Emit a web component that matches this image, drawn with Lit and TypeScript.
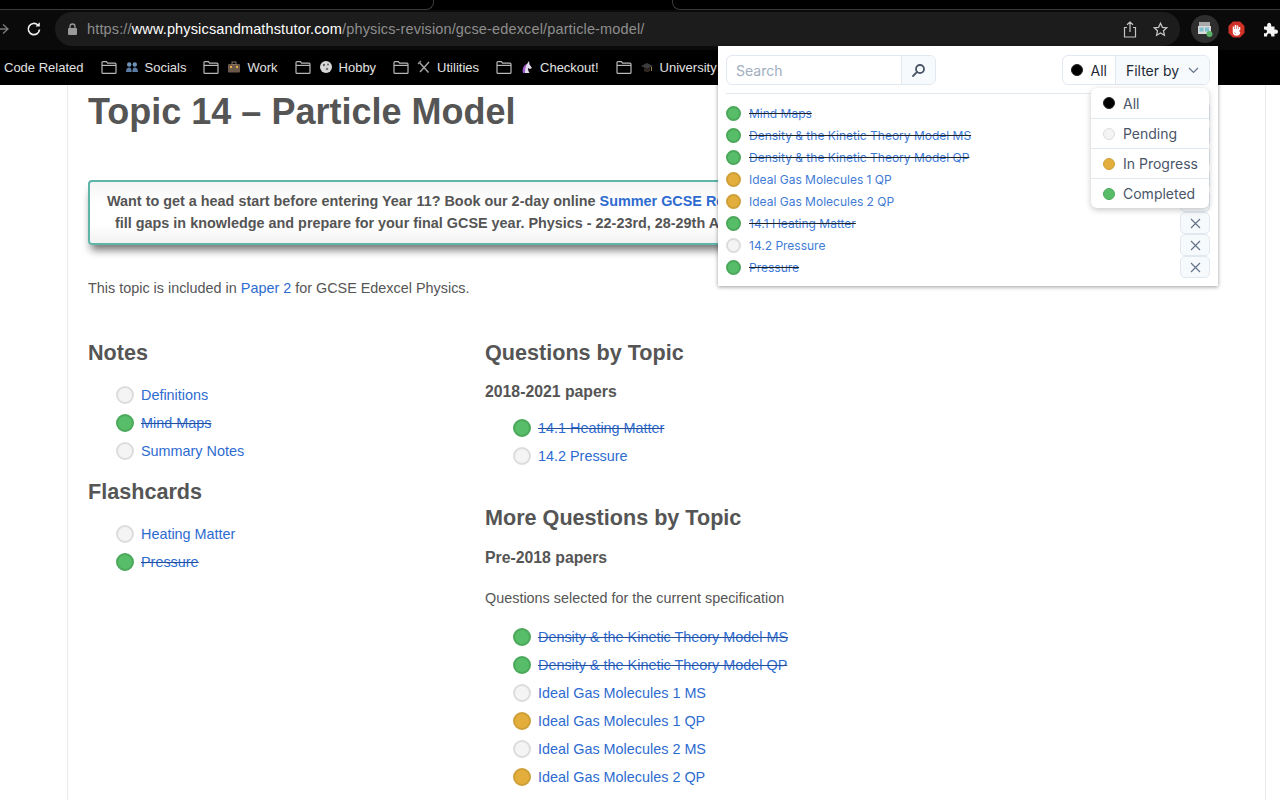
import { LitElement, html, css, svg } from "lit";
import { customElement } from "lit/decorators.js";

type S = "p" | "g" | "y" | "k";

const folder = svg`<svg class="folder" width="16" height="13" viewBox="0 0 16 13" fill="none" stroke="#b8b8b8" stroke-width="1.2"><path d="M1 3V1.6C1 1 1.4.7 2 .7h3.4l1.2 1.5H14c.6 0 1 .4 1 1v8.2c0 .6-.4 1-1 1H2c-.6 0-1-.4-1-1z"/><path d="M1 4.4h14"/></svg>`;

const emoji: Record<string, unknown> = {
  socials: svg`<svg width="14" height="12" viewBox="0 0 14 12"><circle cx="4.2" cy="3.5" r="2.2" fill="#6f93b8"/><circle cx="9.8" cy="3.5" r="2.2" fill="#6f93b8"/><path d="M1 11c0-3 1.2-4.6 3.2-4.6S6.6 8 6.6 11zM7.400 11c0-3 .6-4.600 2.400-4.600S13 8 13 11z" fill="#5b7da3"/></svg>`,
  work: svg`<svg width="14" height="12" viewBox="0 0 14 12"><rect x="1" y="3" width="12" height="8.500" rx="1" fill="#6b5848"/><rect x="5" y="1" width="4" height="2.500" fill="none" stroke="#8a7664"/><rect x="3" y="5" width="2" height="2" fill="#e0b040"/><rect x="9" y="5" width="2" height="2" fill="#e0b040"/></svg>`,
  hobby: svg`<svg width="14" height="14" viewBox="0 0 14 14"><circle cx="7" cy="7" r="6" fill="#d8d8d8"/><circle cx="5" cy="5" r="1.200" fill="#666"/><circle cx="9" cy="4.500" r="1" fill="#666"/><circle cx="8" cy="9" r="1.300" fill="#777"/></svg>`,
  tools: svg`<svg width="14" height="14" viewBox="0 0 14 14" fill="none" stroke="#a8a8a8" stroke-width="1.400"><path d="M2 2l9.500 10.500M12 2L3 12"/><path d="M1 4l3-3" stroke="#888"/></svg>`,
  unicorn: svg`<svg width="14" height="14" viewBox="0 0 14 14"><path d="M3 13c0-5 1.500-8 4-9l2-3 .5 3.500L12 8l-2 1-2-1c0 2 .5 3.500 1.500 5z" fill="#e4dcef"/><path d="M3 13c-1-4 .5-8 4-9-1.500 3-2 6-2 9z" fill="#a05cc8"/></svg>`,
  cap: svg`<svg width="14" height="13" viewBox="0 0 14 13"><path d="M7 2L1 5l6 3 6-3z" fill="#3c3c3c"/><path d="M4 7v3c1.500 1.200 4.500 1.200 6 0V7L7 8.500z" fill="#302a20"/><path d="M11.500 6v4" stroke="#a08040"/></svg>`,
};

const bookmarks: [string, string][] = [
  ["Socials", "socials"],
  ["Work", "work"],
  ["Hobby", "hobby"],
  ["Utilities", "tools"],
  ["Checkout!", "unicorn"],
  ["University Related", "cap"],
];

const popupRows: [S, string][] = [
  ["g", "Mind Maps"],
  ["g", "Density & the Kinetic Theory Model MS"],
  ["g", "Density & the Kinetic Theory Model QP"],
  ["y", "Ideal Gas Molecules 1 QP"],
  ["y", "Ideal Gas Molecules 2 QP"],
  ["g", "14.1 Heating Matter"],
  ["p", "14.2 Pressure"],
  ["g", "Pressure"],
];

const filters: [S, string][] = [
  ["k", "All"],
  ["p", "Pending"],
  ["y", "In Progress"],
  ["g", "Completed"],
];

const pageLink = (s: S, t: string) => html`<li class="item">
  <span class="mark ${s}"></span><a class=${s === "g" ? "done" : ""}>${t}</a>
</li>`;

@customElement("app-root")
export class AppRoot extends LitElement {
  static styles = css`
    :host { display: block; width: 1280px; height: 800px; overflow: hidden; position: relative; background: #fff; font-family: "Liberation Sans", Arial, sans-serif; }
    .chrome { height: 85px; background: #000; display: flex; flex-direction: column; overflow: hidden; }
    .tabs { height: 10px; display: flex; flex: none; }
    .tabL { width: 433px; height: 9px; border-bottom: 1px solid #3a3a3a; border-right: 1px solid #3a3a3a; border-bottom-right-radius: 8px; flex: none; }
    .tabGap { width: 238px; flex: none; }
    .tabR { flex: 1; height: 9px; border-bottom: 1px solid #3a3a3a; border-left: 1px solid #3a3a3a; border-bottom-left-radius: 8px; }
    .toolbar { height: 40px; display: flex; align-items: center; flex: none; background: #0a0a0a; padding-bottom: 2px; box-sizing: border-box; }
    .nav { width: 55px; flex: none; display: flex; align-items: center; justify-content: space-between; padding-right: 13px; box-sizing: border-box; }
    .nav svg { display: block; }
    .omni { width: 1125px; height: 34px; flex: none; background: #1c1c1c; border-radius: 17px; display: flex; align-items: center; padding: 0 12px 0 13px; box-sizing: border-box; }
    .url { margin-left: 10px; font-size: 14.5px; color: #8e8e8e; white-space: nowrap; letter-spacing: 0.01em; }
    .url b { font-weight: 400; color: #fff; }
    .omniIcons { margin-left: auto; display: flex; gap: 16px; align-items: center; padding-right: 0; }
    .ext { display: flex; align-items: center; margin-left: 11px; height: 28px; }
    .extOn { width: 28px; height: 28px; border-radius: 50%; background: #2e2e2e; display: flex; align-items: center; justify-content: center; }
    .extRest { display: flex; align-items: center; gap: 18px; margin-left: 9px; }
    .bookmarks { flex: 1; display: flex; align-items: center; background: #000; color: #e2e2e2; font-size: 13px; white-space: nowrap; overflow: hidden; padding-left: 4px; padding-bottom: 1px; box-sizing: border-box; }
    .bm { display: flex; align-items: center; flex: none; margin-left: 17px; }
    .bm:first-child { margin-left: 0; }
    .bm .folder { margin-right: 8px; }
    .bm .em { display: flex; width: 14px; justify-content: center; margin-right: 6px; }

    .page { margin-left: 67px; width: 1199px; height: 715px; box-sizing: border-box; border-left: 1px solid #ebebeb; border-right: 1px solid #ebebeb; padding: 0 20px; color: #555; overflow: hidden; font-size: 14.4px; }
    h1 { margin: 6px 0 0; font-size: 36px; line-height: 42px; font-weight: 700; color: #555; white-space: nowrap; }
    .banner { margin-top: 47px; width: 1120px; height: 65px; box-sizing: border-box; border: 2px solid #5fb5a8; border-radius: 4px; background: linear-gradient(#f4f4f4, #fff 35%, #fff 70%, #f2f2f2); box-shadow: 0 8px 8px -3px rgba(0, 0, 0, 0.55); font-weight: 700; font-size: 14.4px; line-height: 21.500px; padding-top: 9px; white-space: nowrap; overflow: hidden; }
    .l1 { padding-left: 17px; }
    .l2 { padding-left: 25px; }
    a { color: #2e6bd0; text-decoration: none; }
    .intro { margin: 33px 0 0; line-height: 20px; }
    .cols { display: grid; grid-template-columns: 397px 1fr; margin-top: 42px; }
    h2 { margin: 0; font-size: 21.600px; line-height: 26px; font-weight: 700; color: #555; }
    h3 { margin: 0; font-size: 15.800px; line-height: 20px; font-weight: 700; color: #555; }
    ul { list-style: none; margin: 0; padding: 0 0 0 28px; }
    .item { height: 28px; display: flex; align-items: center; gap: 7px; }
    .mark { width: 14px; height: 14px; border-radius: 50%; border: 2px solid; flex: none; }
    .mark.g { background: #57bd68; border-color: #4ba85b; }
    .mark.p { background: #f4f4f4; border-color: #dcdcdc; }
    .mark.y { background: #e3ae3c; border-color: #cf9f38; }
    .mark.k { background: #000; border-color: #222; }
    .done { text-decoration: line-through; text-decoration-color: #234f99; }
    .left h2.n { margin-bottom: 15px; }
    .left ul { margin-bottom: 14px; }
    .left h2.f { margin-bottom: 15px; }
    .right .q { margin-bottom: 16px; }
    .right h3.a { margin-bottom: 12px; }
    .right ul.a { margin-bottom: 35px; }
    .right .m { margin-bottom: 17px; }
    .right p { margin: 20px 0 15px; line-height: 20px; }

    .popup { position: absolute; left: 718px; top: 46px; width: 500px; height: 240px; background: #fff; box-shadow: 0 1px 4px rgba(0, 0, 0, 0.4); box-sizing: border-box; padding: 9px 8px 0; font-family: Inter, "Liberation Sans", sans-serif; color: #374151; }
    .bar { display: flex; justify-content: space-between; height: 30px; }
    .group { display: flex; height: 30px; border: 1px solid #e2e8f0; border-radius: 6px; box-sizing: border-box; overflow: hidden; align-items: stretch; font-size: 14px; }
    .search { width: 174px; box-sizing: border-box; padding-left: 9px; display: flex; align-items: center; color: #a0aec0; }
    .addon { background: #f7fafc; border-left: 1px solid #e2e8f0; display: flex; align-items: center; justify-content: center; }
    .addon.s { width: 33px; }
    .sel { display: flex; align-items: center; gap: 8px; padding: 0 8px; color: #1f2937; font-size: 14px; }
    .sel .dot, .menu .dot { width: 12px; height: 12px; border-radius: 50%; flex: none; box-sizing: border-box; border: 1px solid; }
    .addon.f { width: 93px; gap: 9px; color: #1f2937; }
    hr { border: 0; border-top: 1px solid #e2e8f0; margin: 8px 0 8px; }
    .rows { display: flex; flex-direction: column; }
    .row { height: 22px; display: flex; align-items: center; font-size: 12px; }
    .row .mark { margin-right: 8px; width: 11px; height: 11px; border-width: 2px; box-sizing: content-box; width: 11px; height: 11px; }
    .row a { color: #3f7bd6; }
    .row a.done { text-decoration-color: #222; }
    .x { margin-left: auto; width: 30px; height: 22px; box-sizing: border-box; border: 1px solid #e2e8f0; border-radius: 5px; background: #f7fafc; display: flex; align-items: center; justify-content: center; }
    .menu { position: absolute; left: 373px; top: 42px; width: 118px; background: #fff; border-radius: 6px; box-shadow: 0 2px 6px rgba(0, 0, 0, 0.22); overflow: hidden; }
    .opt { height: 30px; box-sizing: border-box; display: flex; align-items: center; gap: 8px; padding-left: 12px; font-size: 14px; color: #4a5568; border-top: 1px solid #e2e8f0; white-space: nowrap; }
    .opt:first-child { border-top: 0; }
    .mdot { width: 12px; height: 12px; border-radius: 50%; box-sizing: border-box; border: 1px solid; flex: none; }
    .mdot.g { background: #57bd68; border-color: #4ba85b; }
    .mdot.p { background: #f4f4f4; border-color: #dcdcdc; }
    .mdot.y { background: #e3ae3c; border-color: #cf9f38; }
    .mdot.k { background: #000; border-color: #222; }
  `;

  render() {
    return html`
      <div class="chrome">
        <div class="tabs"><div class="tabL"></div><div class="tabGap"></div><div class="tabR"></div></div>
        <div class="toolbar">
          <div class="nav">
            <svg width="9" height="12" viewBox="0 0 9 12" fill="none" stroke="#7a7a7a" stroke-width="1.400"><path d="M0 6h8M3 1.500L8 6l-5 4.500"/></svg>
            <svg width="16" height="16" viewBox="0 0 16 16" fill="none" stroke="#f0f0f0" stroke-width="1.700"><path d="M13.500 8.500A5.600 5.600 0 1 1 11.800 4"/><path d="M13.800 1.200v4.300H9.500" fill="#f0f0f0" stroke="none"/></svg>
          </div>
          <div class="omni">
            <svg width="9" height="12" viewBox="0 0 9 12"><rect x="0" y="5" width="9" height="7" rx="1" fill="#9a9a9a"/><path d="M2 5.500V3.500a2.500 2.500 0 0 1 5 0v2" fill="none" stroke="#9a9a9a" stroke-width="1.300"/></svg>
            <span class="url">https://<b>www.physicsandmathstutor.com</b>/physics-revision/gcse-edexcel/particle-model/</span>
            <div class="omniIcons">
              <svg width="14" height="17" viewBox="0 0 14 17" fill="none" stroke="#c4c4c4" stroke-width="1.200"><path d="M4 6.500H1.500v9.500h11V6.500H10M7 11V1M4 3.800L7 1l3 2.800"/></svg>
              <svg width="15" height="15" viewBox="0 0 15 15" fill="none" stroke="#c4c4c4" stroke-width="1.300"><path d="M7.500 1.300l1.900 4 4.400.5-3.300 3 .9 4.400-3.900-2.200-3.900 2.200.9-4.400-3.300-3 4.400-.5z"/></svg>
            </div>
          </div>
          <div class="ext">
            <div class="extOn">
              <svg width="16" height="17" viewBox="0 0 16 17"><rect x="2" y="1" width="11" height="4" fill="#a9a9a9"/><rect x="1" y="5" width="13" height="8" fill="#d9d9d9"/><rect x="2.500" y="6.500" width="4" height="4" fill="#7dbfd0"/><rect x="8" y="6.500" width="4" height="4" fill="#7dbfd0"/><circle cx="12.500" cy="13" r="3" fill="#58b368"/></svg>
            </div>
            <div class="extRest">
              <svg width="17" height="17" viewBox="0 0 17 17"><path d="M5 .5h7L16.500 5v7L12 16.500H5L.5 12V5z" fill="#d13226"/><path d="M5.500 8V5.500M7.500 8V4M9.500 8V4.500M11.500 9V6M5.500 8v3c0 2 1.500 3 3 3s3-1 3-3" stroke="#fff" stroke-width="1.500" fill="none"/><path d="M6 8h5.500v4L8.500 13.500 6 11z" fill="#fff"/></svg>
              <svg width="15" height="15" viewBox="0 0 15 15"><path d="M1 4.500h3.200C3.800 2 5 .8 6.200.8S8.600 2 8.200 4.500h3.300v3.200c2.500-.4 3.500.8 3.500 2s-1 2.400-3.500 2v2.800H8.200c.4-2.200-.8-3-2-3s-2.400.8-2 3H1v-3.300c2.200.4 3-.8 3-1.800s-.8-2.200-3-1.800z" fill="#f4f4f4"/></svg>
            </div>
          </div>
        </div>
        <div class="bookmarks">
          <div class="bm">Code Related</div>
          ${bookmarks.map(
            ([t, e]) => html`<div class="bm">${folder}<span class="em">${emoji[e]}</span>${t}</div>`
          )}
        </div>
      </div>

      <div class="page">
        <h1>Topic 14 – Particle Model</h1>
        <div class="banner">
          <div class="l1">Want to get a head start before entering Year 11? Book our 2-day online <a>Summer GCSE Refresher Course</a></div>
          <div class="l2">fill gaps in knowledge and prepare for your final GCSE year. Physics - 22-23rd, 28-29th Aug</div>
        </div>
        <p class="intro">This topic is included in <a>Paper 2</a> for GCSE Edexcel Physics.</p>
        <div class="cols">
          <div class="left">
            <h2 class="n">Notes</h2>
            <ul>
              ${pageLink("p", "Definitions")}
              ${pageLink("g", "Mind Maps")}
              ${pageLink("p", "Summary Notes")}
            </ul>
            <h2 class="f">Flashcards</h2>
            <ul>
              ${pageLink("p", "Heating Matter")}
              ${pageLink("g", "Pressure")}
            </ul>
          </div>
          <div class="right">
            <h2 class="q">Questions by Topic</h2>
            <h3 class="a">2018-2021 papers</h3>
            <ul class="a">
              ${pageLink("g", "14.1 Heating Matter")}
              ${pageLink("p", "14.2 Pressure")}
            </ul>
            <h2 class="m">More Questions by Topic</h2>
            <h3>Pre-2018 papers</h3>
            <p>Questions selected for the current specification</p>
            <ul>
              ${pageLink("g", "Density & the Kinetic Theory Model MS")}
              ${pageLink("g", "Density & the Kinetic Theory Model QP")}
              ${pageLink("p", "Ideal Gas Molecules 1 MS")}
              ${pageLink("y", "Ideal Gas Molecules 1 QP")}
              ${pageLink("p", "Ideal Gas Molecules 2 MS")}
              ${pageLink("y", "Ideal Gas Molecules 2 QP")}
            </ul>
          </div>
        </div>
      </div>

      <div class="popup">
        <div class="bar">
          <div class="group">
            <div class="search">Search</div>
            <div class="addon s">
              <svg width="15" height="15" viewBox="0 0 15 15" fill="none" stroke="#4a5568" stroke-width="1.800"><circle cx="9" cy="6" r="4"/><path d="M6 9l-4 4" stroke-linecap="round"/></svg>
            </div>
          </div>
          <div class="group">
            <div class="sel"><span class="mdot k"></span>All</div>
            <div class="addon f">
              Filter by
              <svg width="11" height="7" viewBox="0 0 11 7" fill="none" stroke="#64748b" stroke-width="1.200"><path d="M1 1l4.500 4.500L10 1"/></svg>
            </div>
          </div>
        </div>
        <hr />
        <div class="rows">
          ${popupRows.map(
            ([s, t]) => html`<div class="row">
              <span class="mark ${s}"></span><a class=${s === "g" ? "done" : ""}>${t}</a>
              <span class="x"><svg width="11" height="11" viewBox="0 0 11 11" fill="none" stroke="#64748b" stroke-width="1.200"><path d="M1 1l9 9M10 1l-9 9"/></svg></span>
            </div>`
          )}
        </div>
        <div class="menu">
          ${filters.map(([s, t]) => html`<div class="opt"><span class="mdot ${s}"></span>${t}</div>`)}
        </div>
      </div>
    `;
  }
}
